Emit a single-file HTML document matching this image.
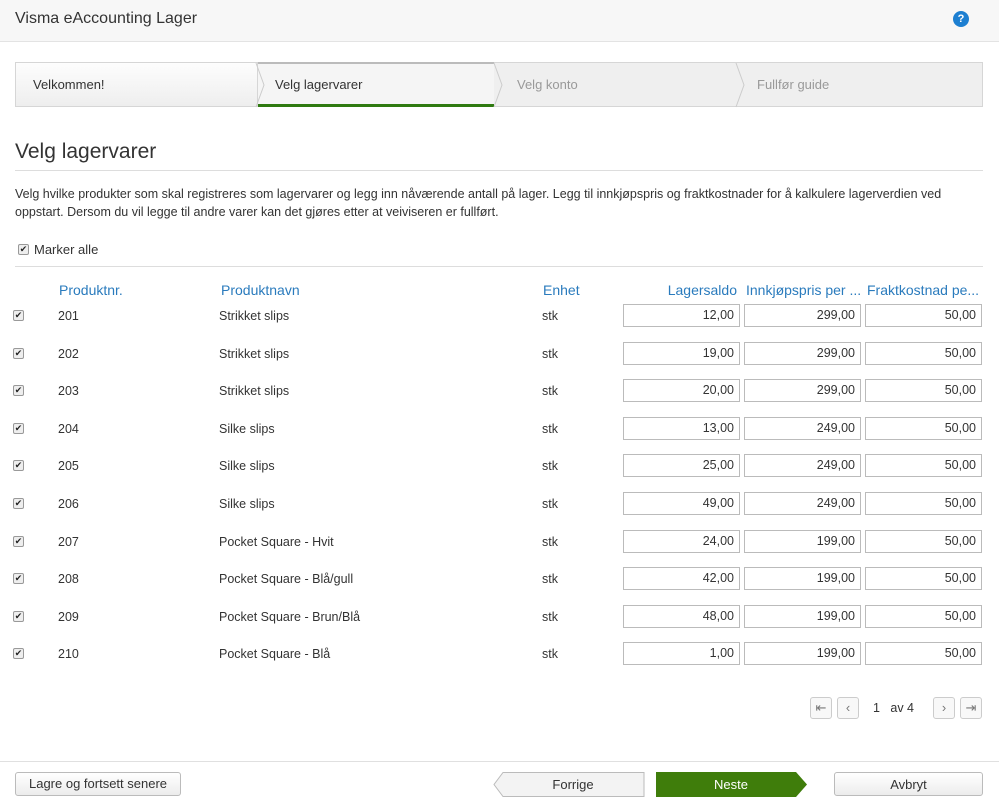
<!DOCTYPE html>
<html><head><meta charset="utf-8"><style>
*{box-sizing:border-box;margin:0;padding:0}
body{width:999px;height:807px;background:#fff;font-family:"Liberation Sans",sans-serif;font-size:12.5px;color:#333;position:relative;overflow:hidden}
.a{position:absolute}
.hdr{left:0;top:0;width:999px;height:42px;background:#f7f7f7;border-bottom:1px solid #e3e3e3}
.step{top:62px;height:45px;line-height:44px;padding-left:17px;font-size:13px}
.cb{width:11px;height:11px;border:1px solid #999;border-radius:2px;background:#eee;font-size:9px;line-height:9px;text-align:center;color:#222}
.th{top:282px;color:#2a7bbd;font-size:14px}
.inp{width:117px;height:23px;border:1px solid #bbb;text-align:right;padding-right:5px;line-height:21px;font-size:12.5px}
.btn{height:24px;border:1px solid #bbb;border-radius:3px;background:linear-gradient(#fff,#ececec);text-align:center;line-height:22px;font-size:13px}
.pg{width:22px;height:22px;border:1px solid #ccc;border-radius:3px;background:#f8f8f8;text-align:center;line-height:20px;color:#777;font-size:13px}
</style></head><body>
<div class="a hdr"></div>
<div class="a" style="left:15px;top:10px;font-size:16px;color:#333">Visma eAccounting Lager</div>
<div class="a" style="left:953px;top:11px;width:16px;height:16px;border-radius:50%;background:#1d7fd1;color:#fff;font-size:11px;font-weight:bold;text-align:center;line-height:16px">?</div>

<div class="a" style="left:15px;top:62px;width:968px;height:45px;background:#efefef;border:1px solid #d6d6d6"></div>
<div class="a step" style="left:15px;width:243px;background:linear-gradient(#fdfdfd,#eee);border:1px solid #d6d6d6;color:#333;line-height:43px">Velkommen!</div>
<div class="a step" style="left:258px;width:236px;background:#f5f5f5;border-top:2px solid #bbb;color:#333;line-height:42px">Velg lagervarer</div>
<div class="a" style="left:258px;top:104px;width:236px;height:3px;background:#2f7a10"></div>
<div class="a step" style="left:500px;color:#999;line-height:46px">Velg konto</div>
<div class="a step" style="left:740px;color:#999;line-height:46px">Fullfør guide</div>
<svg class="a" style="left:250px;top:62px" width="260" height="46"><path d="M6 1 L14 23 L6 45" fill="none" stroke="#ccc"/><path d="M244 1 L252 23 L244 45" fill="none" stroke="#ccc"/></svg>
<svg class="a" style="left:730px;top:62px" width="20" height="46"><path d="M6 1 L14 23 L6 45" fill="none" stroke="#ccc"/></svg>

<div class="a" style="left:15px;top:140px;font-size:21px;color:#333">Velg lagervarer</div>
<div class="a" style="left:15px;top:170px;width:968px;height:1px;background:#ddd"></div>
<div class="a" style="left:15px;top:185px;width:970px;line-height:18px;font-size:12.5px">Velg hvilke produkter som skal registreres som lagervarer og legg inn nåværende antall på lager. Legg til innkjøpspris og fraktkostnader for å kalkulere lagerverdien ved oppstart. Dersom du vil legge til andre varer kan det gjøres etter at veiviseren er fullført.</div>
<div class="a cb" style="left:18px;top:244px">✔</div>
<div class="a" style="left:34px;top:242px;font-size:13px">Marker alle</div>
<div class="a" style="left:15px;top:266px;width:968px;height:1px;background:#ddd"></div>

<div class="a th" style="left:59px">Produktnr.</div>
<div class="a th" style="left:221px">Produktnavn</div>
<div class="a th" style="left:543px">Enhet</div>
<div class="a th" style="left:623px;width:114px;text-align:right">Lagersaldo</div>
<div class="a th" style="left:746px">Innkjøpspris per ...</div>
<div class="a th" style="left:867px">Fraktkostnad pe...</div>

<div id="rows"></div>
<script>
var d=[[201,"Strikket slips","12,00","299,00"],[202,"Strikket slips","19,00","299,00"],[203,"Strikket slips","20,00","299,00"],[204,"Silke slips","13,00","249,00"],[205,"Silke slips","25,00","249,00"],[206,"Silke slips","49,00","249,00"],[207,"Pocket Square - Hvit","24,00","199,00"],[208,"Pocket Square - Blå/gull","42,00","199,00"],[209,"Pocket Square - Brun/Blå","48,00","199,00"],[210,"Pocket Square - Blå","1,00","199,00"]];
var h="";d.forEach(function(r,i){var y=Math.round(308+i*37.6);
h+='<div class="a cb" style="left:13px;top:'+(y+2)+'px">✔</div><div class="a" style="left:58px;top:'+(y+1)+'px">'+r[0]+'</div><div class="a" style="left:219px;top:'+(y+1)+'px">'+r[1]+'</div><div class="a" style="left:542px;top:'+(y+1)+'px">stk</div><div class="a inp" style="left:623px;top:'+(y-4)+'px">'+r[2]+'</div><div class="a inp" style="left:744px;top:'+(y-4)+'px">'+r[3]+'</div><div class="a inp" style="left:865px;top:'+(y-4)+'px">50,00</div>';});
document.getElementById("rows").innerHTML=h;
</script>

<div class="a pg" style="left:810px;top:697px">⇤</div>
<div class="a pg" style="left:837px;top:697px">‹</div>
<div class="a" style="left:873px;top:701px">1&nbsp;&nbsp; av 4</div>
<div class="a pg" style="left:933px;top:697px">›</div>
<div class="a pg" style="left:960px;top:697px">⇥</div>

<div class="a" style="left:0;top:761px;width:999px;height:1px;background:#e0e0e0"></div>
<div class="a btn" style="left:15px;top:772px;width:166px">Lagre og fortsett senere</div>
<svg class="a" style="left:493px;top:772px" width="152" height="25"><path d="M10 .5 H151 V24.5 H10 L1 12.5 Z" fill="#f3f3f3" stroke="#bbb"/></svg>
<div class="a" style="left:503px;top:777px;width:140px;text-align:center;font-size:13px">Forrige</div>
<svg class="a" style="left:656px;top:772px" width="152" height="25"><path d="M0 0 H140 L151 12.5 L140 25 H0 Z" fill="#3f7d0b"/></svg>
<div class="a" style="left:656px;top:777px;width:150px;text-align:center;color:#fff;font-size:13px">Neste</div>
<div class="a btn" style="left:834px;top:772px;width:149px;line-height:24px">Avbryt</div>
</body></html>
